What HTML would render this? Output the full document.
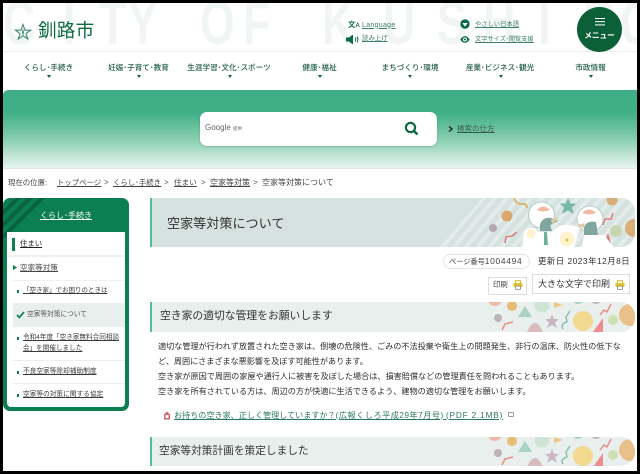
<!DOCTYPE html>
<html lang="ja"><head><meta charset="utf-8"><title>空家等対策について</title>
<style>
*{box-sizing:border-box}
html,body{margin:0;padding:0;width:640px;height:474px;overflow:hidden;background:#000}
body{font-family:"Liberation Sans","Noto Sans CJK JP",sans-serif;color:#333}
#p{position:absolute;left:3px;top:3px;width:634px;height:468px;background:#fff;overflow:hidden;filter:blur(.3px)}
.a{position:absolute;white-space:nowrap;line-height:1}
u{text-underline-offset:1px}
.bg{position:absolute;top:-10.5px;font:bold 62px/1 "Liberation Sans",sans-serif;color:#f1f6f4;transform:scaleX(.72);transform-origin:0 0}
.n{position:absolute;top:61px;font-size:7.6px;font-weight:500;line-height:1;color:#245f49;text-align:center;transform:translateX(-50%);white-space:nowrap}
.c{position:absolute;top:72px;width:0;height:0;border:2.5px solid transparent;border-top:3px solid #0b5f3c;margin-left:-2.5px}
.dot{position:absolute;width:2px;height:3px;background:#0b7a50}
.body{position:absolute;left:155px;font-size:8.15px;line-height:1;white-space:nowrap;color:#2e2e2e}
.side{font-size:6.7px;color:#3c3c3c}
</style></head><body><div id="p">

<!-- header bg letters -->
<div class="bg" style="left:0">C</div><div class="bg" style="left:60px">I</div><div class="bg" style="left:96px">T</div><div class="bg" style="left:125px">Y</div>
<div class="bg" style="left:197px">O</div><div class="bg" style="left:240px">F</div>
<div class="bg" style="left:319px">K</div><div class="bg" style="left:380px">U</div><div class="bg" style="left:434px">S</div><div class="bg" style="left:480px">H</div><div class="bg" style="left:535px">I</div><div class="bg" style="left:580px">R</div><div class="bg" style="left:617px">O</div>
<div class="a" style="left:0;top:48px;width:634px;height:1px;background:#e8eeec"></div>

<!-- logo -->
<svg class="a" style="left:11px;top:20px" width="18" height="18" viewBox="0 0 18 18"><path d="M9 1.5L11 7.2H16.6L12 10.6L13.8 16L9 12.7L4.2 16L6 10.6L1.4 7.2H7Z" fill="none" stroke="#3f8a6b" stroke-width="1.1"/><path d="M9 5L10 9.5L9 13L8 9.5Z" fill="#3f8a6b"/></svg>
<div class="a" style="left:35px;top:19px;font-size:18.6px;color:#0c6a42;letter-spacing:.2px">釧路市</div>

<!-- header links -->
<div class="a" style="left:345px;top:18px;font-size:7.5px;font-weight:bold;color:#1c6b4a">文<span style="font-size:6px">A</span></div>
<div class="a" style="left:359px;top:18.5px;font-size:7px;color:#3d7f6a;letter-spacing:.3px"><u>Language</u></div>
<svg class="a" style="left:343px;top:31px" width="14" height="11" viewBox="0 0 14 11"><path d="M0 3.5H3L7 .5V10.5L3 7.5H0Z" fill="#0b6a42"/><path d="M9 3.5Q10.5 5.5 9 7.5M11 2.5Q12.8 5.5 11 8.5" fill="none" stroke="#0b6a42"/></svg>
<div class="a" style="left:359px;top:33px;font-size:6.4px;color:#3d7f6a"><u>読み上げ</u></div>
<svg class="a" style="left:457px;top:16px" width="10" height="10" viewBox="0 0 10 10"><circle cx="5" cy="5" r="4.7" fill="#0b6a42"/><path d="M2.3 4H7.7L5 7.6Z" fill="#fff"/></svg>
<div class="a" style="left:472px;top:18.5px;font-size:6.3px;color:#3d7f6a"><u>やさしい日本語</u></div>
<svg class="a" style="left:457px;top:32px" width="10" height="9" viewBox="0 0 10 9"><path d="M.3 4.5Q5-2.2 9.7 4.5Q5 11.2.3 4.5Z" fill="#0b6a42"/><circle cx="5" cy="4.5" r="2" fill="#fff"/><circle cx="5" cy="4.5" r="1" fill="#0b6a42"/></svg>
<div class="a" style="left:472px;top:33.5px;font-size:6.2px;color:#3d7f6a"><u>文字サイズ･閲覧支援</u></div>

<!-- menu -->
<div class="a" style="left:574px;top:4px;width:45px;height:45px;border-radius:50%;background:#0b6038"></div>
<div class="a" style="left:592px;top:15px;width:10px;height:1px;background:#fff;box-shadow:0 3.2px 0 #fff,0 6.4px 0 #fff"></div>
<div class="a" style="left:581px;top:28.5px;width:31px;text-align:center;font-size:7.7px;color:#fff;font-weight:bold;letter-spacing:-.1px">メニュー</div>

<!-- nav -->
<div class="n" style="left:45.5px">くらし･手続き</div><div class="c" style="left:46px"></div>
<div class="n" style="left:135.5px">妊娠･子育て･教育</div><div class="c" style="left:136px"></div>
<div class="n" style="left:226px">生涯学習･文化･スポーツ</div><div class="c" style="left:227px"></div>
<div class="n" style="left:316.5px">健康･福祉</div><div class="c" style="left:317px"></div>
<div class="n" style="left:407px">まちづくり･環境</div><div class="c" style="left:407px"></div>
<div class="n" style="left:497px">産業･ビジネス･観光</div><div class="c" style="left:498px"></div>
<div class="n" style="left:587.5px">市政情報</div><div class="c" style="left:588px"></div>

<!-- search band -->
<div class="a" style="left:0;top:87px;width:634px;height:78px;background:linear-gradient(#3fae86 0,#40b088 30%,#86cdb0 62%,#e8f5f0 100%);border-radius:5px 0 0 0"></div>
<div class="a" style="left:0;top:165px;width:634px;height:1px;background:#dfe8e4"></div>
<div class="a" style="left:197px;top:108.5px;width:237px;height:34.5px;background:#fff;border-radius:7px;box-shadow:0 1px 2px rgba(0,0,0,.15)"></div>
<div class="a" style="left:202px;top:121px;font-size:8px;color:#666">Google <span style="font-size:4.5px">提供</span></div>
<svg class="a" style="left:401px;top:118px" width="15" height="15" viewBox="0 0 15 15"><circle cx="6.5" cy="6.5" r="4.6" fill="none" stroke="#0b6a42" stroke-width="2.2"/><path d="M10 10L13.5 13.5" stroke="#0b6a42" stroke-width="2.4"/></svg>
<svg class="a" style="left:445px;top:123px" width="5" height="6" viewBox="0 0 5 6"><path d="M1 .5L4 3L1 5.5" fill="none" stroke="#222" stroke-width="1.4"/></svg>
<div class="a" style="left:454px;top:122px;font-size:7.5px;color:#3a5a50"><u>検索の仕方</u></div>

<!-- breadcrumb -->
<div class="a" style="left:5px;top:176px;font-size:7.4px;color:#444">現在の位置:</div>
<div class="a" style="left:54px;top:176px;font-size:7.4px;color:#444"><u>トップページ</u></div>
<div class="a" style="left:101px;top:176px;font-size:8px;color:#555">&gt;</div>
<div class="a" style="left:110px;top:176px;font-size:7.4px;color:#444"><u>くらし･手続き</u></div>
<div class="a" style="left:161px;top:176px;font-size:8px;color:#555">&gt;</div>
<div class="a" style="left:171px;top:176px;font-size:7.6px;color:#444"><u>住まい</u></div>
<div class="a" style="left:198px;top:176px;font-size:8px;color:#555">&gt;</div>
<div class="a" style="left:207px;top:176px;font-size:8px;color:#444"><u>空家等対策</u></div>
<div class="a" style="left:250px;top:176px;font-size:8px;color:#555">&gt;</div>
<div class="a" style="left:259px;top:176px;font-size:8px;color:#444">空家等対策について</div>

<!-- sidebar -->
<div class="a" style="left:0;top:195px;width:126px;height:213px;background:#0b7f52;border-radius:7px;overflow:hidden">
<svg style="position:absolute;left:0;top:0" width="42" height="40" viewBox="0 0 42 40"><g stroke="#0a6340" stroke-width="4" fill="none"><path d="M17-2L-2 17"/><path d="M29-2L-2 29"/><path d="M41-2L-2 41"/></g></svg>
</div>
<div class="a" style="left:0;top:209px;width:126px;text-align:center;font-size:8px;color:#fff"><u>くらし･手続き</u></div>
<div class="a" style="left:4px;top:229px;width:118px;height:175px;background:#fff;border-radius:0 0 4px 4px"></div>
<div class="a" style="left:9px;top:235px;width:3px;height:13px;background:#0b7f52"></div>
<div class="a" style="left:17px;top:237px;font-size:7.4px;color:#222"><u>住まい</u></div>
<div class="a" style="left:4px;top:252px;width:118px;height:2px;background:#eef1f0"></div>
<svg class="a" style="left:10px;top:262px" width="4" height="5"><path d="M0 0L4 2.5L0 5Z" fill="#0b7f52"/></svg>
<div class="a" style="left:17px;top:261px;font-size:7.6px;color:#444"><u>空家等対策</u></div>
<div class="a" style="left:10px;top:277px;width:112px;height:1px;background:#eef1f0"></div>
<div class="dot" style="left:14px;top:287px"></div>
<div class="a side" style="left:20px;top:285px;font-size:6.5px"><u>「空き家」でお困りのときは</u></div>
<div class="a" style="left:10px;top:300px;width:112px;height:24px;background:#e9efed"></div>
<svg class="a" style="left:13px;top:308px" width="9" height="8" viewBox="0 0 9 8"><path d="M1 4L3.3 6.5L8 1" fill="none" stroke="#0b7f52" stroke-width="1.7"/></svg>
<div class="a side" style="left:24px;top:309px;color:#555">空家等対策について</div>
<div class="dot" style="left:14px;top:334px"></div>
<div class="a side" style="left:20px;top:332px;font-size:6.6px"><u>令和4年度「空き家無料合同相談</u></div>
<div class="a side" style="left:20px;top:343px;font-size:6.6px"><u>会」を開催しました</u></div>
<div class="a" style="left:10px;top:357px;width:112px;height:1px;background:#e9eeec"></div>
<div class="dot" style="left:14px;top:368px"></div>
<div class="a side" style="left:20px;top:366px"><u>不良空家等除却補助制度</u></div>
<div class="a" style="left:10px;top:380px;width:112px;height:1px;background:#e9eeec"></div>
<div class="dot" style="left:14px;top:391px"></div>
<div class="a side" style="left:20px;top:389px"><u>空家等の対策に関する協定</u></div>

<!-- title -->
<div class="a" style="left:147px;top:195px;width:485px;height:49px;background:#d5e2df;border-left:2px solid #53bd97;border-radius:0 14px 14px 0;overflow:hidden">
<svg style="position:absolute;left:0;top:0" width="483" height="49" viewBox="0 0 483 49">
<defs><pattern id="st" width="9" height="9" patternUnits="userSpaceOnUse" patternTransform="rotate(40)"><rect width="4" height="9" fill="#e2ecea"/></pattern></defs>
<path d="M288 49L330 0H483V49Z" fill="url(#st)"/>
<path d="M362 0Q365 7 370 6T375 10" fill="none" stroke="#dcb46a" stroke-width="1.8"/>
<circle cx="355" cy="18" r="5.5" fill="#d9a76a"/><circle cx="341" cy="30" r="4" fill="#b5a8ae"/>
<path d="M353 45L354 39L360 38L365 34" fill="none" stroke="#e0807a" stroke-width="1.6"/>
<path d="M416 0L418.5 5.5H424.5L420 9.5L422 16L416 12.5L410 16L412 9.5L407.5 5.5H413.5Z" fill="#78b8a7"/>
<path d="M451 27L453 21L459 21L461 15" fill="none" stroke="#e0807a" stroke-width="1.6"/>
<circle cx="464" cy="33" r="6" fill="#c5d6b0"/><circle cx="482" cy="30" r="9" fill="#d9ae78"/>
<circle cx="460" cy="2" r="5.5" fill="#d9ae78"/><path d="M451 49L456 35L460 49Z" fill="#e07a7a"/>
<path d="M372 34Q376 28 384 31L392 49H370Z" fill="#fff"/>
<circle cx="379" cy="36" r="5" fill="#fff3cf"/>
<circle cx="389.5" cy="17" r="13" fill="#fff" stroke="#a8c4bc" stroke-width=".8"/><path d="M385 12Q391 5 398 12Q391 15 385 12Z" fill="#f4b8a2"/>
<circle cx="438" cy="21" r="13" fill="#fff" stroke="#a8c4bc" stroke-width=".8"/><path d="M430 15Q437 8 444 15Q437 18 430 15Z" fill="#f4b8a2"/>
<path d="M388 26Q392 17 402 21L406 23L398 27L400 33H388Z" fill="#7fa69f"/><path d="M399 21L407 20L400 26Z" fill="#e3c9a0"/>
<path d="M384 34H402L404 49H378Z" fill="#fff"/><path d="M392 34H395L396 47H392Z" fill="#6fb09b"/>
<path d="M432 30Q434 22 444 24L446 37H432Z" fill="#7fa69f"/><path d="M425 27L433 25L432 30Z" fill="#e3c9a0"/>
<path d="M432 37H452L462 49H430Z" fill="#fff"/>
<path d="M400 34Q410 22 428 30L422 49H399Z" fill="#fff"/>
<circle cx="415" cy="41" r="7.5" fill="#fff3cf"/><circle cx="415" cy="42" r="1.5" fill="#e8b84f"/>
</svg></div>
<div class="a" style="left:164px;top:214px;font-size:13.1px;color:#333">空家等対策について</div>

<!-- meta -->
<div class="a" style="left:440px;top:251px;width:87px;height:15px;border:1px solid #e3e3e3;border-radius:8px"></div>
<div class="a" style="left:446px;top:254px;font-size:7.2px;color:#444">ページ番号<span style="font-size:8.4px;letter-spacing:.7px">1004494</span></div>
<div class="a" style="left:535px;top:254px;font-size:8.4px;color:#333;letter-spacing:.5px">更新日 2023年12月8日</div>
<div class="a" style="left:485px;top:274px;width:39px;height:18px;border:1px solid #ddd;background:#fff"></div>
<div class="a" style="left:490px;top:277.5px;font-size:7.4px;color:#444">印刷</div>
<div class="a" style="left:529px;top:271px;width:98px;height:20px;border:1px solid #ddd;background:#fff"></div>
<div class="a" style="left:535px;top:276.5px;font-size:9px;color:#333">大きな文字で印刷</div>
<svg class="a" style="left:510px;top:277px" width="10" height="10" viewBox="0 0 10 10"><path d="M2.5 3V.7H7.5V3" fill="none" stroke="#d9b520"/><rect x=".5" y="3" width="9" height="4" fill="#e6c52e"/><rect x="2.5" y="6" width="5" height="3.3" fill="#fff" stroke="#777" stroke-width=".7"/></svg>
<svg class="a" style="left:612px;top:277px" width="10" height="10" viewBox="0 0 10 10"><path d="M2.5 3V.7H7.5V3" fill="none" stroke="#d9b520"/><rect x=".5" y="3" width="9" height="4" fill="#e6c52e"/><rect x="2.5" y="6" width="5" height="3.3" fill="#fff" stroke="#777" stroke-width=".7"/></svg>

<!-- h2 #1 -->
<div class="a" style="left:147px;top:299px;width:485px;height:30px;background:#e8efed;border-left:2px solid #53bd97;border-radius:0 14px 14px 0;overflow:hidden">
<svg style="position:absolute;left:0;top:0" width="483" height="30" viewBox="0 0 483 30"><circle cx="343" cy="-3" r="7" fill="#eeb7a8"/><circle cx="360" cy="4" r="5" fill="#e6bd72"/><path d="M366 15L373 4L380 15Z" fill="#a9d2c4"/><circle cx="390" cy="3" r="7.5" fill="#cfe3d6"/><path d="M402 0L411 3L402 6Z" fill="#edc984"/><circle cx="426" cy="-4" r="6" fill="#a9d2c4"/><circle cx="444" cy="-4" r="6" fill="#c6b9c0"/><path d="M448 13L452 8L455 10L459 2" fill="none" stroke="#e88c86" stroke-width="1.4"/><circle cx="346" cy="16" r="4" fill="#bdb3b8"/><path d="M350 28L353 22L361 20" fill="none" stroke="#ea8d86" stroke-width="1.5"/><path d="M375 30Q383 12 391 30Z" fill="#d8bcc0"/><path d="M400 12L402 17H407L403 20.5L405 26L400 23L395 26L397 20.5L393 17H398Z" fill="#c9b7c4"/><path d="M411 27Q408 22 415 20L414 15L418 9" fill="none" stroke="#7fbfa9" stroke-width="1.4"/><circle cx="431" cy="19" r="10" fill="#f1d992"/><path d="M441 30L451 16V30Z" fill="#ef8d8d"/><circle cx="461" cy="18" r="5" fill="#cfe0b5"/><circle cx="478" cy="13" r="11" fill="#e9c08a"/></svg></div>
<div class="a" style="left:157px;top:308px;font-size:10.8px;color:#333">空き家の適切な管理をお願いします</div>

<!-- body -->
<div class="body" style="top:340px">適切な管理が行われず放置された空き家は、倒壊の危険性、ごみの不法投棄や衛生上の問題発生、非行の温床、防火性の低下な</div>
<div class="body" style="top:355px">ど、周囲にさまざまな悪影響を及ぼす可能性があります。</div>
<div class="body" style="top:370px">空き家が原因で周囲の家屋や通行人に被害を及ぼした場合は、損害賠償などの管理責任を問われることもあります。</div>
<div class="body" style="top:385px">空き家を所有されている方は、周辺の方が快適に生活できるよう、建物の適切な管理をお願いします。</div>
<svg class="a" style="left:160px;top:408px" width="8" height="9" viewBox="0 0 8 9"><path d="M1 3.5L4 .5L7 3.5V8.5H1Z" fill="#d0666c"/><rect x="2.5" y="4" width="3" height="3" fill="#fff"/></svg>
<div class="a" style="left:171px;top:407.5px;font-size:8.1px;color:#2a7a5c"><u>お持ちの空き家、正しく管理していますか？<span style="letter-spacing:.55px">(広報くしろ平成29年7月号)</span> <span style="font-size:8.3px;letter-spacing:.8px">(PDF 2.1MB)</span></u></div>
<div class="a" style="left:505px;top:409px;width:6px;height:5px;border:1px solid #999;border-radius:1px"></div>

<!-- h2 #2 -->
<div class="a" style="left:147px;top:434px;width:485px;height:28.5px;background:#e8efed;border-left:2px solid #53bd97;border-radius:0 14px 14px 0;overflow:hidden">
<svg style="position:absolute;left:0;top:0" width="483" height="30" viewBox="0 0 483 30"><circle cx="343" cy="-3" r="7" fill="#eeb7a8"/><circle cx="360" cy="4" r="5" fill="#e6bd72"/><path d="M366 15L373 4L380 15Z" fill="#a9d2c4"/><circle cx="390" cy="3" r="7.5" fill="#cfe3d6"/><path d="M402 0L411 3L402 6Z" fill="#edc984"/><circle cx="426" cy="-4" r="6" fill="#a9d2c4"/><circle cx="444" cy="-4" r="6" fill="#c6b9c0"/><path d="M448 13L452 8L455 10L459 2" fill="none" stroke="#e88c86" stroke-width="1.4"/><circle cx="346" cy="16" r="4" fill="#bdb3b8"/><path d="M350 28L353 22L361 20" fill="none" stroke="#ea8d86" stroke-width="1.5"/><path d="M375 30Q383 12 391 30Z" fill="#d8bcc0"/><path d="M400 12L402 17H407L403 20.5L405 26L400 23L395 26L397 20.5L393 17H398Z" fill="#c9b7c4"/><path d="M411 27Q408 22 415 20L414 15L418 9" fill="none" stroke="#7fbfa9" stroke-width="1.4"/><circle cx="431" cy="19" r="10" fill="#f1d992"/><path d="M441 30L451 16V30Z" fill="#ef8d8d"/><circle cx="461" cy="18" r="5" fill="#cfe0b5"/><circle cx="478" cy="13" r="11" fill="#e9c08a"/></svg></div>
<div class="a" style="left:156px;top:443px;font-size:10.7px;color:#333">空家等対策計画を策定しました</div>

</div></body></html>
